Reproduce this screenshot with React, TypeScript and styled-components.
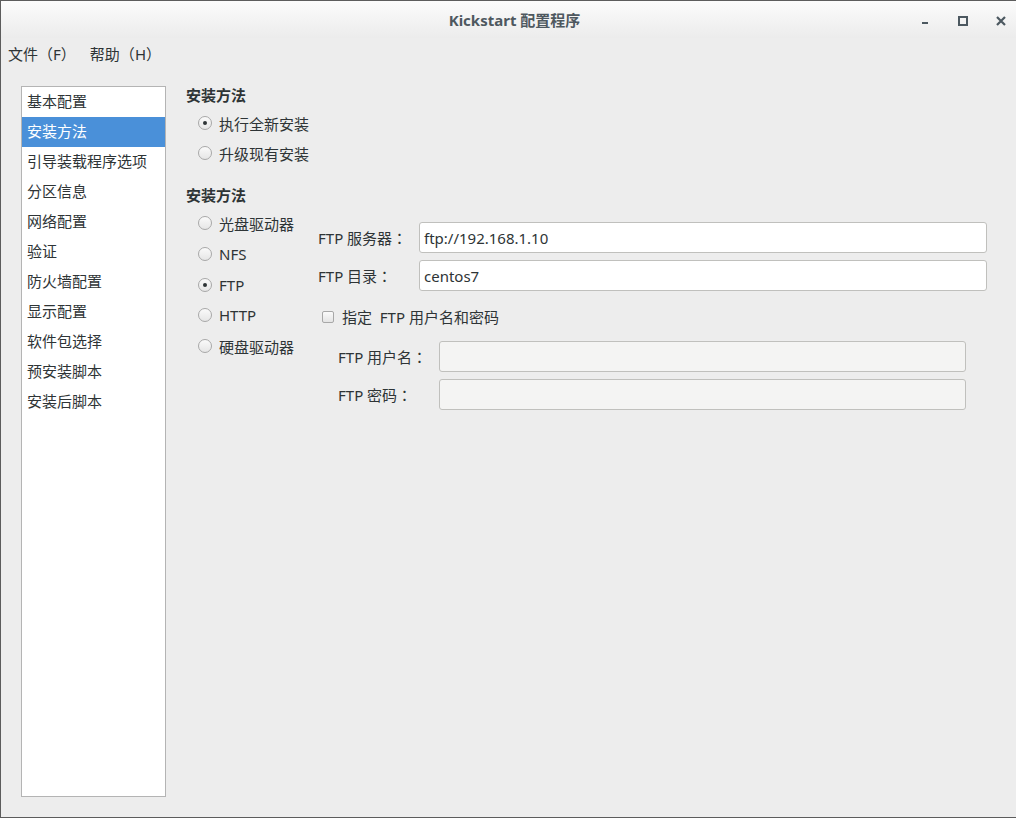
import styled, { createGlobalStyle } from "styled-components";

const GlobalStyle = createGlobalStyle`
  html, body {
    margin: 0;
    padding: 0;
    background: #ededed;
  }
  * {
    box-sizing: border-box;
  }
`;

const FONT = `"Noto Sans", "Noto Sans CJK SC", sans-serif`;

const Window = styled.div`
  width: 1016px;
  height: 818px;
  display: flex;
  flex-direction: column;
  background: #ededed;
  border: 1px solid #5c5c5c;
  border-right: none;
  font-family: ${FONT};
  font-size: 15px;
  color: #2e3436;
  overflow: hidden;
`;

const TitleBar = styled.div`
  height: 37px;
  flex-shrink: 0;
  position: relative;
  display: flex;
  align-items: center;
  justify-content: center;
  background: linear-gradient(to bottom, #fbfbfb 0%, #f2f2f2 60%, #ececec 100%);
`;

const Title = styled.div`
  font-weight: bold;
  font-size: 15px;
  color: #4e585f;
  margin-left: 12px;
`;

const Controls = styled.div`
  position: absolute;
  right: 8px;
  top: 14px;
  display: flex;
  gap: 24px;
`;

const ControlButton = styled.div`
  width: 14px;
  height: 12px;
  display: flex;
  align-items: center;
  justify-content: center;
  color: #4c5860;
`;

const MenuBar = styled.div`
  height: 30px;
  flex-shrink: 0;
  display: flex;
  align-items: center;
  padding-left: 7px;
  gap: 14px;
`;

const MenuItem = styled.span`
  color: #2e3436;
`;

// centred full-width punctuation, as in the original UI font
const Punct = styled.span`
  font-family: "Noto Sans CJK TC", "Noto Sans CJK SC", sans-serif;
`;

const Body = styled.div`
  flex: 1;
  display: flex;
  padding: 18px 29px 20px 20px;
  gap: 20px;
`;

const Sidebar = styled.div`
  width: 145px;
  flex-shrink: 0;
  background: #fff;
  border: 1px solid #b4b4b4;
`;

const SidebarItem = styled.div<{ $active?: boolean }>`
  height: 30px;
  line-height: 29px;
  padding-left: 5px;
  background: ${(p) => (p.$active ? "#4a90d9" : "transparent")};
  color: ${(p) => (p.$active ? "#fff" : "#2e3436")};
  white-space: nowrap;
`;

const Content = styled.div`
  flex: 1;
  display: flex;
  flex-direction: column;
`;

const Heading = styled.div<{ $top?: number }>`
  font-weight: bold;
  height: 20px;
  line-height: 18px;
  margin-top: ${(p) => p.$top ?? 0}px;
`;

const RadioGroup = styled.div<{ $gap: number; $top?: number }>`
  display: flex;
  flex-direction: column;
  padding-left: 12px;
  gap: ${(p) => p.$gap}px;
  margin-top: ${(p) => p.$top ?? 0}px;
`;

const RadioRow = styled.label`
  display: flex;
  align-items: center;
  height: 26px;
  gap: 7px;
  white-space: nowrap;
`;

const RadioCircle = styled.span<{ $checked?: boolean }>`
  width: 14px;
  height: 14px;
  border-radius: 50%;
  border: 1px solid #a8a8a8;
  background: linear-gradient(to bottom, #fafafa, #e6e6e6);
  display: flex;
  align-items: center;
  justify-content: center;
  flex-shrink: 0;

  &::after {
    content: "";
    width: 4px;
    height: 4px;
    border-radius: 50%;
    background: ${(p) => (p.$checked ? "#2e3436" : "transparent")};
  }
`;

const MethodSection = styled.div`
  display: flex;
  margin-top: 4px;
`;

const MethodList = styled.div`
  width: 132px;
  flex-shrink: 0;
`;

const FormArea = styled.div`
  flex: 1;
  display: flex;
  flex-direction: column;
  padding-top: 12px;
`;

const FieldGrid = styled.div<{ $indent?: number; $right?: number }>`
  display: grid;
  grid-template-columns: 101px 1fr;
  row-gap: 7px;
  align-items: center;
  padding-left: ${(p) => p.$indent ?? 0}px;
  padding-right: ${(p) => p.$right ?? 0}px;
`;

const FieldLabel = styled.span`
  white-space: pre;
`;

const TextField = styled.div<{ $disabled?: boolean }>`
  height: 31px;
  border: 1px solid #c0c0bd;
  border-radius: 3px;
  background: ${(p) => (p.$disabled ? "#f4f4f3" : "#fff")};
  padding-left: 4px;
  display: flex;
  align-items: center;
  color: #2e3436;
`;

const CheckRow = styled.label`
  display: flex;
  align-items: center;
  height: 31px;
  margin-top: 10px;
  margin-bottom: 9px;
  padding-left: 4px;
  gap: 8px;
  white-space: pre;
`;

const CheckBox = styled.span`
  width: 12px;
  height: 12px;
  border: 1px solid #a8a8a8;
  border-radius: 2px;
  background: linear-gradient(to bottom, #fafafa, #e4e4e4);
  flex-shrink: 0;
`;

const sideItems = [
  "基本配置",
  "安装方法",
  "引导装载程序选项",
  "分区信息",
  "网络配置",
  "验证",
  "防火墙配置",
  "显示配置",
  "软件包选择",
  "预安装脚本",
  "安装后脚本",
];

const methods = ["光盘驱动器", "NFS", "FTP", "HTTP", "硬盘驱动器"];

const Label = ({ text }: { text: string }) => (
  <FieldLabel>
    {text}
    <Punct>：</Punct>
  </FieldLabel>
);

export default function App() {
  return (
    <Window>
      <GlobalStyle />
      <TitleBar>
        <Title>Kickstart 配置程序</Title>
        <Controls>
          <ControlButton>
            <svg width="8" height="12" viewBox="0 0 8 12">
              <rect x="1" y="7" width="6" height="2" fill="currentColor" />
            </svg>
          </ControlButton>
          <ControlButton>
            <svg width="10" height="10" viewBox="0 0 10 10">
              <rect x="1" y="1" width="8" height="8" fill="none" stroke="currentColor" strokeWidth="2" />
            </svg>
          </ControlButton>
          <ControlButton>
            <svg width="10" height="10" viewBox="0 0 10 10">
              <path d="M1 1 L9 9 M9 1 L1 9" stroke="currentColor" strokeWidth="2.2" />
            </svg>
          </ControlButton>
        </Controls>
      </TitleBar>

      <MenuBar>
        <MenuItem>
          文件<Punct>（</Punct>F<Punct>）</Punct>
        </MenuItem>
        <MenuItem>
          帮助<Punct>（</Punct>H<Punct>）</Punct>
        </MenuItem>
      </MenuBar>

      <Body>
        <Sidebar>
          {sideItems.map((s, i) => (
            <SidebarItem key={s} $active={i === 1}>
              {s}
            </SidebarItem>
          ))}
        </Sidebar>

        <Content>
          <Heading>安装方法</Heading>
          <RadioGroup $gap={4} $top={4}>
            <RadioRow>
              <RadioCircle $checked />
              执行全新安装
            </RadioRow>
            <RadioRow>
              <RadioCircle />
              升级现有安装
            </RadioRow>
          </RadioGroup>

          <Heading $top={20}>安装方法</Heading>
          <MethodSection>
            <MethodList>
              <RadioGroup $gap={4.75}>
                {methods.map((m) => (
                  <RadioRow key={m}>
                    <RadioCircle $checked={m === "FTP"} />
                    {m}
                  </RadioRow>
                ))}
              </RadioGroup>
            </MethodList>

            <FormArea>
              <FieldGrid>
                <Label text="FTP 服务器" />
                <TextField>ftp://192.168.1.10</TextField>
                <Label text="FTP 目录" />
                <TextField>centos7</TextField>
              </FieldGrid>
              <CheckRow>
                <CheckBox />
                {"指定  FTP 用户名和密码"}
              </CheckRow>
              <FieldGrid $indent={20} $right={21}>
                <Label text="FTP 用户名" />
                <TextField $disabled />
                <Label text="FTP 密码" />
                <TextField $disabled />
              </FieldGrid>
            </FormArea>
          </MethodSection>
        </Content>
      </Body>
    </Window>
  );
}
